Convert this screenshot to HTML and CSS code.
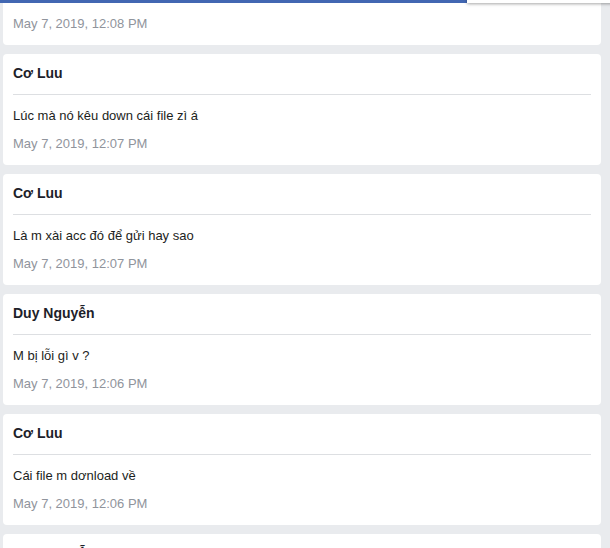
FILE: index.html
```html
<!DOCTYPE html>
<html lang="vi">
<head>
<meta charset="utf-8">
<title>Messages</title>
<link rel="stylesheet" href="styles.css">
</head>
<body>
<div class="topbar"><div class="topbar-blue"></div><div class="topbar-gap"></div></div>
<div class="popover"></div>
<div class="list">
  <div class="card card-first">
    <div class="date">May 7, 2019, 12:08 PM</div>
  </div>
  <div class="card">
    <div class="name">Cơ Luu</div>
    <div class="msg">Lúc mà nó kêu down cái file zì á</div>
    <div class="date">May 7, 2019, 12:07 PM</div>
  </div>
  <div class="card">
    <div class="name">Cơ Luu</div>
    <div class="msg">Là m xài acc đó để gửi hay sao</div>
    <div class="date">May 7, 2019, 12:07 PM</div>
  </div>
  <div class="card">
    <div class="name">Duy Nguyễn</div>
    <div class="msg">M bị lỗi gì v ?</div>
    <div class="date">May 7, 2019, 12:06 PM</div>
  </div>
  <div class="card">
    <div class="name">Cơ Luu</div>
    <div class="msg">Cái file m dơnload về</div>
    <div class="date">May 7, 2019, 12:06 PM</div>
  </div>
  <div class="card">
    <div class="name">Duy Nguyễn</div>
    <div class="msg">Ok</div>
    <div class="date">May 7, 2019, 12:05 PM</div>
  </div>
</div>
</body>
</html>
```
FILE: styles.css
```css
html, body {
  margin: 0;
  padding: 0;
  height: 548px;
  overflow: hidden;
}
body {
  background: #e9ebee;
  font-family: "Liberation Sans", Arial, sans-serif;
  color: #1d2129;
  position: relative;
}
.topbar {
  display: flex;
  height: 3px;
}
.topbar-blue {
  width: 467px;
  background: #4267b2;
}
.topbar-gap {
  flex: 1;
}
.popover {
  position: absolute;
  top: -20px;
  left: 467px;
  width: 160px;
  height: 23px;
  background: #fff;
  box-shadow: 0 1px 3px rgba(0, 0, 0, 0.35);
}
.list {
  display: flex;
  flex-direction: column;
  gap: 9px;
  padding: 0 9px 0 3px;
}
.card {
  background: #fff;
  border-radius: 4px;
  padding: 12px 10px 13px;
}
.card-first {
  border-radius: 0 0 4px 4px;
  padding-top: 13px;
  padding-bottom: 13px;
}
.name {
  font-size: 14px;
  font-weight: bold;
  line-height: 14px;
  padding-bottom: 14px;
  border-bottom: 1px solid #dddfe2;
}
.msg {
  font-size: 13px;
  line-height: 16px;
  margin-top: 13px;
  color: #1c1e21;
}
.date {
  font-size: 13px;
  line-height: 16px;
  color: #90949c;
  margin-top: 12px;
}
.card-first .date {
  margin-top: 0;
}
```
